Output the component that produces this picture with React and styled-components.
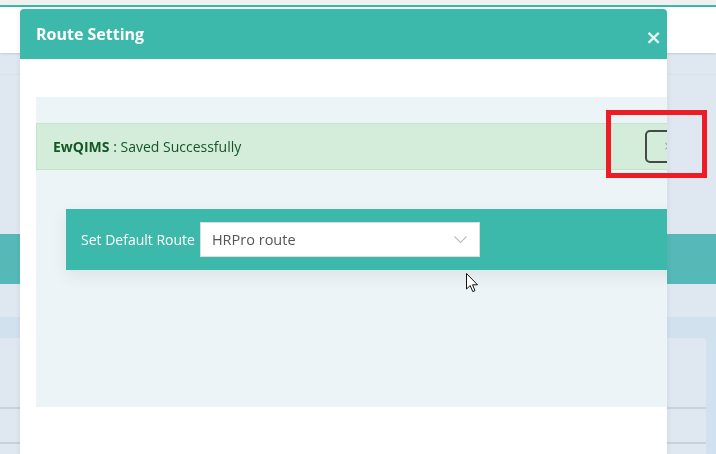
import React from 'react';
import styled, { createGlobalStyle } from 'styled-components';

const GlobalStyle = createGlobalStyle`
    html, body {
        margin: 0;
        padding: 0;
        overflow: hidden;
        background: #dfe8f1;
        font-family: "Open Sans", "Noto Sans", sans-serif;
    }
    * { box-sizing: border-box; }
`;

/* page behind the modal */
const Page = styled.div`
    width: 716px;
    height: 454px;
    overflow: hidden;
    background: #dfe8f1;
`;

const TopStrip = styled.div`
    height: 5px;
    background: #f0f0f0;
    border-bottom: 2px solid #3cb9aa;
    box-sizing: content-box;
`;

const PageHeader = styled.div`
    height: 46px;
    background: #ffffff;
    box-shadow: 0 1px 2px rgba(0, 0, 0, 0.12);
`;

const SubBar = styled.div`
    height: 22px;
    border-bottom: 1px solid #d8e2ec;
`;

const TealBand = styled.div`
    margin-top: 159px;
    height: 50px;
    background: #56b9b7;
`;

const Section = styled.div`
    margin-top: 33px;
    padding-top: 21px;
    background: #d1e1ee;
    height: 200px;
`;

const Card = styled.div`
    margin-right: 10px;
    height: 100%;
    background: #dfe8f1;
    border-top-right-radius: 4px;
    padding-top: 69px;
`;

const CardRow = styled.div`
    height: 35px;
    border-top: 2px solid #c9d2db;
`;

/* modal */
const Modal = styled.div`
    position: fixed;
    top: 9px;
    left: 20px;
    width: 647px;
    height: 460px;
    background: #ffffff;
    border-radius: 4px 4px 0 0;
    overflow: hidden;
    box-shadow: 0 0 6px rgba(0, 0, 0, 0.08);
`;

const ModalHeader = styled.div`
    height: 50px;
    background: #3cb9aa;
    display: flex;
    align-items: center;
    justify-content: space-between;
    padding: 0 5px 0 16px;
`;

const ModalTitle = styled.h4`
    margin: 0;
    color: #ffffff;
    font-size: 16px;
    font-weight: 700;
`;

const HeaderClose = styled.span`
    color: #e3f5f2;
    font-size: 20px;
    font-weight: 700;
    line-height: 1;
    margin-top: 5px;
    font-family: "DejaVu Sans", sans-serif;
`;

const ModalBody = styled.div`
    padding: 38px 0 0 16px;
`;

const Panel = styled.div`
    width: 680px;
    height: 310px;
    background: #edf4f8;
    padding-top: 26px;
`;

const Alert = styled.div`
    height: 47px;
    background: #d4edda;
    border: 1px solid #c3e6cb;
    color: #155724;
    font-size: 14px;
    display: flex;
    align-items: center;
    padding-left: 16px;
`;

const AlertText = styled.span`
    width: 592px;
    b { font-weight: 700; }
`;

const AlertClose = styled.span`
    width: 40px;
    height: 33px;
    border: 2.5px solid #444a47;
    border-radius: 5px;
    color: #9aa;
    font-size: 16px;
    line-height: 28px;
    padding-left: 17px;
`;

const RouteBar = styled.div`
    margin: 39px 0 0 30px;
    height: 61px;
    background: #3cb9aa;
    display: flex;
    align-items: center;
    padding-left: 15px;
    box-shadow: 0 6px 16px rgba(0, 0, 0, 0.07);
`;

const RouteLabel = styled.label`
    color: #ffffff;
    font-size: 14px;
    margin-right: 5px;
`;

const Select = styled.div`
    width: 280px;
    height: 35px;
    background: #ffffff;
    border: 1px solid #dddddd;
    display: flex;
    align-items: center;
    justify-content: space-between;
    padding: 0 12px 0 11px;
    color: #555555;
    font-size: 14.5px;
`;

/* overlays */
const Highlight = styled.div`
    position: fixed;
    left: 606px;
    top: 110px;
    width: 101px;
    height: 68px;
    border: 5px solid #ee1c25;
`;

const Cursor = styled.svg`
    position: fixed;
    left: 466px;
    top: 273px;
`;

export default function App() {
    return (
        <>
            <GlobalStyle />
            <Page>
                <TopStrip />
                <PageHeader />
                <SubBar />
                <TealBand />
                <Section>
                    <Card>
                        <CardRow />
                        <CardRow />
                    </Card>
                </Section>
            </Page>
            <Modal>
                <ModalHeader>
                    <ModalTitle>Route Setting</ModalTitle>
                    <HeaderClose>×</HeaderClose>
                </ModalHeader>
                <ModalBody>
                    <Panel>
                        <Alert>
                            <AlertText><b>EwQIMS</b> : Saved Successfully</AlertText>
                            <AlertClose>×</AlertClose>
                        </Alert>
                        <RouteBar>
                            <RouteLabel>Set Default Route</RouteLabel>
                            <Select>
                                <span>HRPro route</span>
                                <svg width="13" height="8" viewBox="0 0 13 8">
                                    <path d="M0.5 0.5 L6.5 6.5 L12.5 0.5" fill="none" stroke="#b8bfca" strokeWidth="1.2" />
                                </svg>
                            </Select>
                        </RouteBar>
                    </Panel>
                </ModalBody>
            </Modal>
            <Highlight />
            <Cursor width="13" height="20" viewBox="0 0 13 20">
                <path d="M0.5 0.5 L0.5 16 L4.2 12.6 L6.8 18.6 L9 17.6 L6.5 11.8 L11.5 11.8 Z" fill="#ffffff" stroke="#111111" strokeWidth="1" strokeLinejoin="round" />
            </Cursor>
        </>
    );
}
